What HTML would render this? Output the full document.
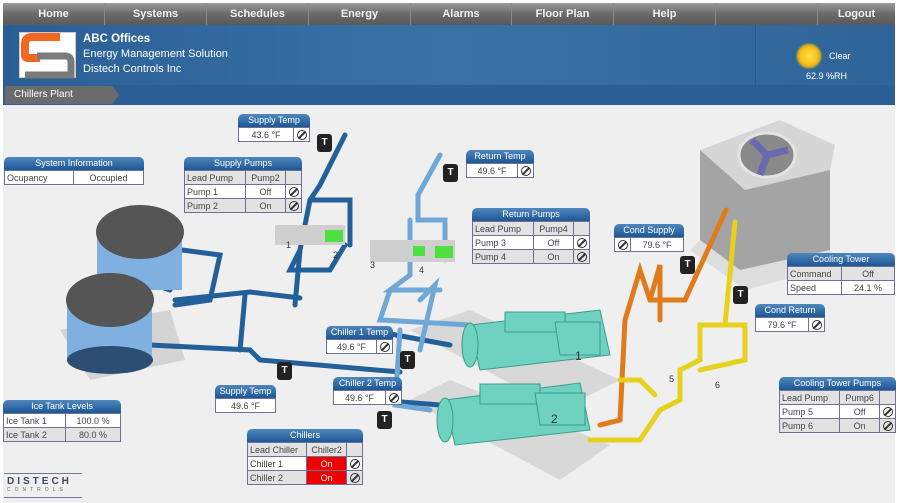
<!DOCTYPE html>
<html><head><meta charset="utf-8"><style>
*{margin:0;padding:0;box-sizing:border-box}
body{width:900px;height:503px;overflow:hidden;background:#fff;font-family:"Liberation Sans",sans-serif;position:relative}
#nav{position:absolute;left:3px;top:3px;width:892px;height:22px;background:linear-gradient(#9a9a9a,#6a6a6a 50%,#5a5a5a);display:flex}
#nav div{flex:none;color:#f2f2f2;font-weight:bold;font-size:11px;text-align:center;line-height:22px;border-right:1px solid #8a8a8a}
#hdr{position:absolute;left:3px;top:25px;width:892px;height:60px;background:linear-gradient(90deg,#2a5f96,#3a72a6 50%,#2f6499)}
#bc{position:absolute;left:3px;top:85px;width:892px;height:20px;background:#2a5e95}
#content{position:absolute;left:3px;top:105px;width:892px;height:398px;background:#efefef}
.p{position:absolute;font-size:9px;color:#444}
.p .t{background:linear-gradient(#4f86bd,#1d5794);color:#fff;text-align:center;border-radius:5px 5px 0 0;height:13px;line-height:13px}
.p table{border-collapse:collapse;width:100%;background:#fff}
.p td{border:1px solid #6f7194;height:14px;padding:0 2px;white-space:nowrap}
.p tr.g td{background:#e2e2e2}
.c{text-align:center}
.ic{width:16px;text-align:center}
.ic i{display:inline-block;width:10px;height:10px;border:1.5px solid #333;border-radius:50%;position:relative;vertical-align:middle}
.ic i:after{content:"";position:absolute;left:3px;top:-1px;width:1.5px;height:10px;background:#333;transform:rotate(45deg)}
.on{background:#e00!important;color:#fff;text-align:center}
.T{position:absolute;width:15px;height:18px;background:#222;border-radius:3px;color:#fff;font-weight:bold;font-size:10px;text-align:center;line-height:18px}
</style></head><body>
<div id="nav">
<div style="width:102px">Home</div><div style="width:102px">Systems</div><div style="width:102px">Schedules</div><div style="width:102px">Energy</div><div style="width:101px">Alarms</div><div style="width:102px">Floor Plan</div><div style="width:102px">Help</div><div style="width:102px"></div><div style="width:77px;border:none">Logout</div>
</div>
<div id="hdr">
<div style="position:absolute;left:16px;top:7px;width:57px;height:46px;background:#fff;border:1px solid #ccc">
<svg width="57" height="46"><path d="M40 4H12Q5 4 5 11V22Q5 25 8 25H20" fill="none" stroke="#f26722" stroke-width="8"/><path d="M17 23H45Q51 23 51 29V42H5" fill="none" stroke="#7a7a7a" stroke-width="7"/></svg></div>
<div style="position:absolute;left:80px;top:8px;color:#fff;font-size:11.5px;font-weight:bold">ABC Offices</div>
<div style="position:absolute;left:80px;top:23px;color:#fff;font-size:11px">Energy Management Solution</div>
<div style="position:absolute;left:80px;top:38px;color:#fff;font-size:11px">Distech Controls Inc</div>
<div style="position:absolute;left:752px;top:0;width:1px;height:60px;background:#2a5a8c"></div>
<div style="position:absolute;left:796px;top:21px;width:20px;height:20px;border-radius:50%;background:radial-gradient(#ffe34a,#f0a800);box-shadow:0 0 2px 2px #f7c000"></div>
<div style="position:absolute;left:826px;top:26px;color:#fff;font-size:9px">Clear</div>
<div style="position:absolute;left:803px;top:46px;color:#fff;font-size:9px">62.9 %RH</div>
</div>
<div id="bc"><div style="position:absolute;left:2px;top:1px;width:114px;height:18px;background:#6b6b6b;clip-path:polygon(0 0,94% 0,100% 50%,94% 100%,0 100%);color:#fff;font-size:10px;line-height:18px;padding-left:9px">Chillers Plant</div></div>
<div id="content"></div>

<svg style="position:absolute;left:0;top:0" width="900" height="503">
<path d="M410 330L470 310L620 380L560 410Z" fill="#d8d8d8"/><path d="M410 400L450 380L610 445L560 480Z" fill="#d8d8d8"/><path d="M60 330L170 310L185 360L90 380Z" fill="#d4d4d4"/>
<!-- cooling tower -->
<path d="M700 240L740 270L830 250L840 265L745 290L690 250Z" fill="#ddd"/>
<path d="M700 150L790 130L830 160L830 250L740 270L700 240Z" fill="#a4a4a4"/>
<path d="M700 150L740 135L780 120L835 145L830 170L745 190Z" fill="#d6d6d6"/>
<ellipse cx="767" cy="155" rx="28" ry="22" fill="#8a8a8a" stroke="#e4e4e4" stroke-width="3"/>
<path d="M767 155L752 140M767 155L788 150M767 155L760 175" stroke="#6a6ab0" stroke-width="7"/>
<!-- blue pipes -->
<g fill="none" stroke="#23609a" stroke-width="5" stroke-linecap="round">
<path d="M345 135L320 185L310 200L300 250L295 305"/>
<path d="M182 250L220 255L210 300L175 305"/><path d="M175 300L250 292L300 298"/>
<path d="M150 345L250 350L260 360L400 372"/><path d="M245 295L240 350"/>
<path d="M310 200H350V245"/><path d="M300 250L290 270L330 270L345 245"/>
<path d="M385 333L450 345"/><path d="M350 398L440 405"/><path d="M140 280L170 290"/>
</g>
<g fill="none" stroke="#6fa8d6" stroke-width="5" stroke-linecap="round">
<path d="M440 155L418 195V220H445V260"/><path d="M410 220V275L390 290H440"/><path d="M390 290L380 320L470 325"/><path d="M400 330L395 405L430 410"/><path d="M420 300L435 285L420 350"/>
</g>
<!-- pumps -->
<g fill="#cfcfcf"><path d="M275 225H345V245H275Z"/><path d="M370 240H455V262H370Z"/></g>
<rect x="325" y="230" width="18" height="12" fill="#4ee040"/><rect x="435" y="246" width="18" height="12" fill="#4ee040"/><rect x="413" y="246" width="12" height="10" fill="#4ee040"/>
<g font-size="9" fill="#333"><text x="286" y="248">1</text><text x="333" y="258">2</text><text x="370" y="268">3</text><text x="419" y="273">4</text><text x="669" y="382">5</text><text x="715" y="388">6</text></g>
<!-- ice tanks -->
<rect x="97" y="230" width="85" height="60" fill="#7fb0e0"/>
<ellipse cx="140" cy="232" rx="44" ry="27" fill="#555"/>
<rect x="67" y="300" width="85" height="60" fill="#7fb0e0"/>
<ellipse cx="110" cy="360" rx="43" ry="14" fill="#2b4e72"/>
<ellipse cx="110" cy="300" rx="44" ry="27" fill="#555"/>
<!-- orange/yellow pipes -->
<g fill="none" stroke-width="5" stroke-linecap="round">
<path d="M726 210L685 300H650L640 270L625 320L620 420L600 425" stroke="#e07b1c"/><path d="M650 300L660 265V320" stroke="#e07b1c"/>
<path d="M735 222L725 325H700V360L680 370V400L660 410L640 440H590" stroke="#e6d21c"/><path d="M725 325H745V360L700 370" stroke="#e6d21c"/><path d="M620 380H640L655 395" stroke="#e6d21c"/>
</g>
<!-- chillers -->
<g fill="#6fd1bf" stroke="#3c9c8c" stroke-width="1">
<path d="M470 325L600 310L610 355L480 370Z"/><rect x="505" y="312" width="60" height="20"/><path d="M555 322H600V355H560Z"/><ellipse cx="470" cy="345" rx="8" ry="22"/>
<path d="M445 400L580 383L590 430L455 445Z"/><rect x="480" y="384" width="60" height="20"/><path d="M535 393H585V425H540Z"/><ellipse cx="445" cy="420" rx="8" ry="22"/>
</g>
<g font-size="12" fill="#333"><text x="575" y="360">1</text><text x="551" y="423">2</text></g>
</svg>

<div class="T" style="left:317px;top:134px">T</div><div class="T" style="left:443px;top:164px">T</div>
<div class="T" style="left:680px;top:256px">T</div><div class="T" style="left:733px;top:286px">T</div>
<div class="T" style="left:277px;top:362px">T</div><div class="T" style="left:400px;top:351px">T</div><div class="T" style="left:377px;top:411px">T</div>

<div class="p" style="left:238px;top:114px;width:72px"><div class="t">Supply Temp</div><table><tr><td class="c">43.6 °F</td><td class="ic"><i></i></td></tr></table></div>
<div class="p" style="left:4px;top:157px;width:140px"><div class="t">System Information</div><table><tr><td style="width:69px">Ocupancy</td><td class="c">Occupied</td></tr></table></div>
<div class="p" style="left:184px;top:157px;width:118px"><div class="t">Supply Pumps</div><table><tr class="g"><td>Lead Pump</td><td class="c">Pump2</td><td class="ic"></td></tr><tr><td>Pump 1</td><td class="c">Off</td><td class="ic"><i></i></td></tr><tr class="g"><td>Pump 2</td><td class="c">On</td><td class="ic"><i></i></td></tr></table></div>
<div class="p" style="left:466px;top:150px;width:68px"><div class="t">Return Temp</div><table><tr><td class="c">49.6 °F</td><td class="ic"><i></i></td></tr></table></div>
<div class="p" style="left:472px;top:208px;width:118px"><div class="t">Return Pumps</div><table><tr class="g"><td>Lead Pump</td><td class="c">Pump4</td><td class="ic"></td></tr><tr><td>Pump 3</td><td class="c">Off</td><td class="ic"><i></i></td></tr><tr class="g"><td>Pump 4</td><td class="c">On</td><td class="ic"><i></i></td></tr></table></div>
<div class="p" style="left:614px;top:224px;width:70px"><div class="t">Cond Supply</div><table><tr><td class="ic"><i></i></td><td class="c">79.6 °F</td></tr></table></div>
<div class="p" style="left:787px;top:253px;width:108px"><div class="t">Cooling Tower</div><table><tr class="g"><td style="width:54px">Command</td><td class="c">Off</td></tr><tr><td>Speed</td><td class="c">24.1 %</td></tr></table></div>
<div class="p" style="left:755px;top:304px;width:70px"><div class="t">Cond Return</div><table><tr><td class="c">79.6 °F</td><td class="ic"><i></i></td></tr></table></div>
<div class="p" style="left:326px;top:326px;width:67px"><div class="t">Chiller 1 Temp</div><table><tr><td class="c">49.6 °F</td><td class="ic"><i></i></td></tr></table></div>
<div class="p" style="left:333px;top:377px;width:69px"><div class="t">Chiller 2 Temp</div><table><tr><td class="c">49.6 °F</td><td class="ic"><i></i></td></tr></table></div>
<div class="p" style="left:215px;top:385px;width:61px"><div class="t">Supply Temp</div><table><tr><td class="c">49.6 °F</td></tr></table></div>
<div class="p" style="left:3px;top:400px;width:118px"><div class="t">Ice Tank Levels</div><table><tr><td style="width:62px">Ice Tank 1</td><td class="c">100.0 %</td></tr><tr class="g"><td>Ice Tank 2</td><td class="c">80.0 %</td></tr></table></div>
<div class="p" style="left:247px;top:429px;width:116px"><div class="t">Chillers</div><table><tr class="g"><td>Lead Chiller</td><td class="c">Chiller2</td><td class="ic"></td></tr><tr><td>Chiller 1</td><td class="on">On</td><td class="ic"><i></i></td></tr><tr class="g"><td>Chiller 2</td><td class="on">On</td><td class="ic"><i></i></td></tr></table></div>
<div class="p" style="left:779px;top:377px;width:117px"><div class="t">Cooling Tower Pumps</div><table><tr class="g"><td>Lead Pump</td><td class="c">Pump6</td><td class="ic"></td></tr><tr><td>Pump 5</td><td class="c">Off</td><td class="ic"><i></i></td></tr><tr class="g"><td>Pump 6</td><td class="c">On</td><td class="ic"><i></i></td></tr></table></div>

<div style="position:absolute;left:4px;top:473px;width:78px;border-top:1px solid #6a7a96;border-bottom:1px solid #6a7a96;height:25px">
<div style="font-size:10px;letter-spacing:3px;color:#3a4a6a;font-weight:bold;padding-left:3px;margin-top:2px">DISTECH</div>
<div style="font-size:5px;letter-spacing:4px;color:#666;padding-left:3px">CONTROLS</div></div>
</body></html>
